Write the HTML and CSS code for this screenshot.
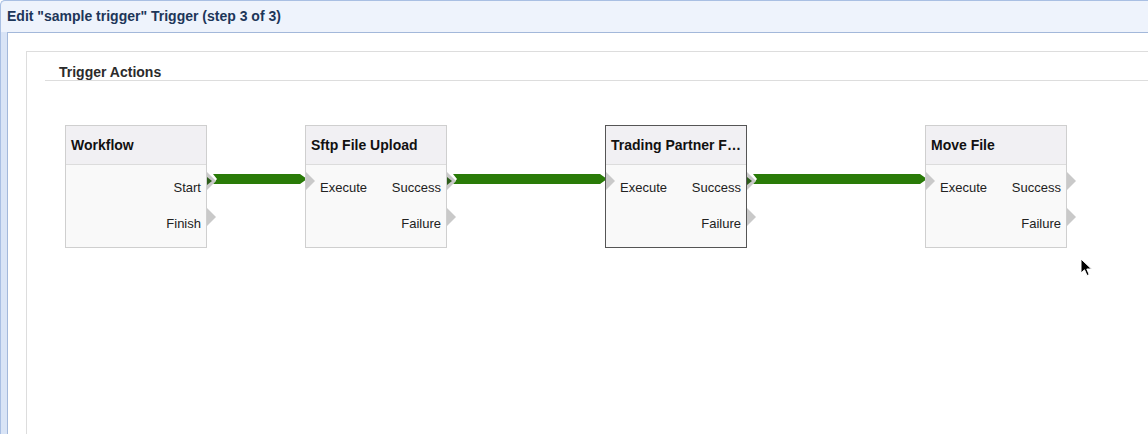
FILE: index.html
```html
<!DOCTYPE html>
<html lang="en">
<head>
    <meta charset="UTF-8">
    <title>Edit Trigger</title>
    <link rel="stylesheet" href="styles.css">
</head>
<body>
    <div class="dialog">
        <div class="titlebar">Edit "sample trigger" Trigger (step 3 of 3)</div>

        <div class="main">
            <div class="panel">
                <div class="section-title">Trigger Actions</div>

                <div class="canvas">
                    <!-- connections -->
                    <svg class="links" width="1000" height="200">
                        <polygon points="186,93 273,93 280,98 273,103 186,103 190,98" />
                        <polygon points="426,93 573,93 580,98 573,103 426,103 430,98" />
                        <polygon points="726,93 893,93 900,98 893,103 726,103 730,98" />
                    </svg>

                    <div class="node" style="left: 38px;">
                        <div class="node-head">Workflow</div>
                        <div class="node-body">
                            <div class="port-row">
                                <span></span>
                                <span class="out linked">Start</span>
                            </div>
                            <div class="port-row">
                                <span></span>
                                <span class="out">Finish</span>
                            </div>
                        </div>
                    </div>

                    <div class="node" style="left: 278px;">
                        <div class="node-head">Sftp File Upload</div>
                        <div class="node-body">
                            <div class="port-row">
                                <span class="in">Execute</span>
                                <span class="out linked">Success</span>
                            </div>
                            <div class="port-row">
                                <span></span>
                                <span class="out">Failure</span>
                            </div>
                        </div>
                    </div>

                    <div class="node selected" style="left: 578px;">
                        <div class="node-head">Trading Partner F…</div>
                        <div class="node-body">
                            <div class="port-row">
                                <span class="in">Execute</span>
                                <span class="out linked">Success</span>
                            </div>
                            <div class="port-row">
                                <span></span>
                                <span class="out">Failure</span>
                            </div>
                        </div>
                    </div>

                    <div class="node" style="left: 898px;">
                        <div class="node-head">Move File</div>
                        <div class="node-body">
                            <div class="port-row">
                                <span class="in">Execute</span>
                                <span class="out">Success</span>
                            </div>
                            <div class="port-row">
                                <span></span>
                                <span class="out">Failure</span>
                            </div>
                        </div>
                    </div>

                    <svg class="cursor" width="14" height="20" viewBox="0 0 14 20">
                        <path d="M1 1 L1 15 L4.5 11.8 L7 17.5 L9.2 16.6 L6.8 11 L11.5 11 Z" fill="#000" stroke="#fff" stroke-width="1" />
                    </svg>
                </div>
            </div>
        </div>
    </div>
</body>
</html>
```

FILE: styles.css
```css
* {
    margin: 0;
    padding: 0;
    box-sizing: border-box;
}

html, body {
    height: 100%;
}

body {
    font-family: 'Liberation Sans', Arial, sans-serif;
    background: #fff;
    overflow: hidden;
}

.dialog {
    height: 100vh;
    display: flex;
    flex-direction: column;
    background: #d9e4f6;
    border-top: 1px solid #a9bfe3;
    border-left: 1px solid #a9bfe3;
    border-top-left-radius: 5px;
    overflow: hidden;
}

.titlebar {
    height: 31px;
    line-height: 31px;
    padding-left: 6px;
    background: #eef3fc;
    border-top-left-radius: 5px;
    color: #1d3659;
    font-size: 14px;
    font-weight: bold;
    white-space: nowrap;
}

.main {
    flex: 1;
    display: flex;
    margin-left: 6px;
    padding: 18px 0 0 18px;
    background: #fff;
    border-top: 1px solid #a3b8da;
    border-left: 1px solid #a3b8da;
}

.panel {
    flex: 1;
    display: flex;
    flex-direction: column;
    border-top: 1px solid #ddd;
    border-left: 1px solid #ddd;
}

.section-title {
    margin: 12px 0 0 18px;
    padding-left: 14px;
    line-height: 16px;
    border-bottom: 1px solid #ddd;
    color: #2b2b2b;
    font-size: 14px;
    font-weight: bold;
}

.canvas {
    position: relative;
    flex: 1;
}

.links {
    position: absolute;
    left: 0;
    top: 0;
    pointer-events: none;
}

.links polygon {
    fill: #2a7b08;
}

.node {
    position: absolute;
    top: 44px;
    width: 142px;
    height: 123px;
    background: #f9f9f9;
    border: 1px solid #cfcfcf;
}

.node.selected {
    border-color: #555;
}

.node-head {
    height: 39px;
    line-height: 38px;
    padding: 0 4px 0 5px;
    background: #f1f0f3;
    border-bottom: 1px solid #dcdcdc;
    color: #111;
    font-size: 14px;
    font-weight: bold;
    white-space: nowrap;
}

.node-body {
    padding-top: 5px;
}

.port-row {
    position: relative;
    display: flex;
    justify-content: space-between;
    height: 36px;
    line-height: 36px;
    padding: 0 5px 0 14px;
    color: #222;
    font-size: 13px;
}

/* grey port arrows */
.in::before,
.out::after {
    content: "";
    position: absolute;
    top: 2px;
    width: 0;
    height: 0;
    border-top: 9px solid transparent;
    border-bottom: 9px solid transparent;
    border-left: 9px solid #c9c9c9;
}

.in::before {
    left: 0;
}

.out::after {
    right: -10px;
}

/* connected output gets a dark marker inside */
.out.linked::before {
    content: "";
    position: absolute;
    top: 7px;
    right: -6px;
    width: 0;
    height: 0;
    border-top: 4px solid transparent;
    border-bottom: 4px solid transparent;
    border-left: 5px solid #2d5e1a;
    z-index: 1;
}

.cursor {
    position: absolute;
    left: 1053px;
    top: 177px;
}
```
